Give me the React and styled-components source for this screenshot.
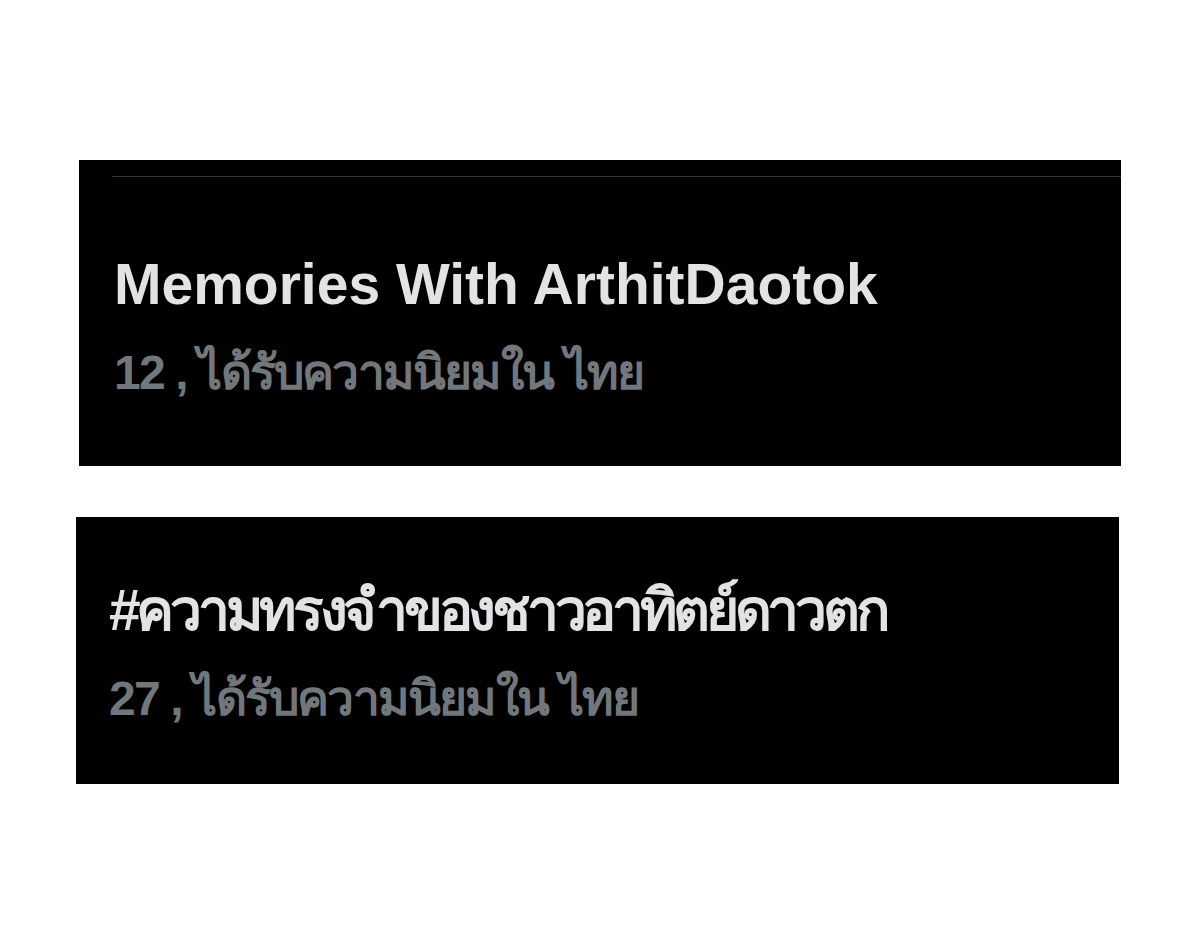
import React from "react";
import styled, { createGlobalStyle } from "styled-components";

const GlobalStyle = createGlobalStyle`
  html, body {
    margin: 0;
    padding: 0;
    background: #ffffff;
  }
  body {
    font-family: "Liberation Sans", "Noto Sans", "DejaVu Sans", sans-serif;
  }
`;

const Page = styled.main`
  width: 1200px;
  min-height: 942px;
  padding-top: 160px;
  box-sizing: border-box;
  display: flex;
  flex-direction: column;
  gap: 51px;
`;

const TrendCard = styled.section`
  margin-left: ${(p) => p.$left}px;
  width: ${(p) => p.$width}px;
  height: ${(p) => p.$height}px;
  background: #000000;
  box-sizing: border-box;
  padding-top: ${(p) => p.$padTop}px;
  display: flex;
  flex-direction: column;
`;

const Divider = styled.div`
  height: 1px;
  margin-top: 16px;
  margin-left: 33px;
  margin-bottom: 73px;
  background: #2f3336;
`;

const Inner = styled.div`
  padding-left: ${(p) => p.$inset}px;
  display: flex;
  flex-direction: column;
  gap: 27px;
`;

const Title = styled.h2`
  margin: 0;
  font-size: 57px;
  line-height: 68px;
  font-weight: 700;
  color: #e1e3e4;
  letter-spacing: ${(p) => p.$tracking || 0}px;
  white-space: nowrap;
`;

const Meta = styled.p`
  margin: 0;
  font-size: 48px;
  line-height: 56px;
  font-weight: 700;
  color: #72777b;
  letter-spacing: -1.8px;
  white-space: nowrap;
`;

const trends = [
  {
    id: 1,
    title: "Memories With ArthitDaotok",
    rank: 12,
    left: 79,
    width: 1042,
    height: 306,
    padTop: 0,
    inset: 35,
    tracking: 0,
    divider: true,
  },
  {
    id: 2,
    title: "#ความทรงจำของชาวอาทิตย์ดาวตก",
    rank: 27,
    left: 76,
    width: 1043,
    height: 267,
    padTop: 59,
    inset: 33,
    tracking: -4.3,
    divider: false,
  },
];

export default function App() {
  return (
    <>
      <GlobalStyle />
      <Page>
        {trends.map((t) => (
          <TrendCard
            key={t.id}
            $left={t.left}
            $width={t.width}
            $height={t.height}
            $padTop={t.padTop}
          >
            {t.divider && <Divider />}
            <Inner $inset={t.inset}>
              <Title $tracking={t.tracking}>{t.title}</Title>
              <Meta>{t.rank} , ได้รับความนิยมใน ไทย</Meta>
            </Inner>
          </TrendCard>
        ))}
      </Page>
    </>
  );
}
